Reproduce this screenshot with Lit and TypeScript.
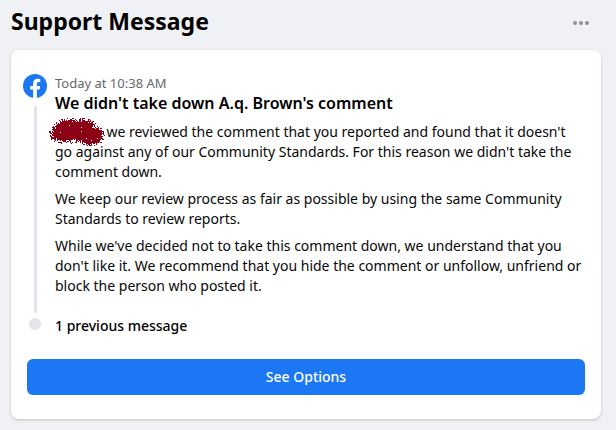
import { LitElement, html, css, svg } from "lit";
import { customElement } from "lit/decorators.js";

/** Builds a spray-paint blot out of one-pixel squares, dense in the middle and loose at the rim. */
function sprayPath(width: number, height: number): string {
  let seed = 71;
  const random = () => {
    seed = (seed * 16807) % 2147483647;
    return seed / 2147483647;
  };
  const blobs = [
    { x: 20, y: 12, rx: 17, ry: 13 },
    { x: 31, y: 12, rx: 18, ry: 13 },
    { x: 41, y: 17, rx: 15, ry: 11 },
    { x: 14, y: 15, rx: 15, ry: 10 },
  ];
  let d = "";
  for (let y = 0; y < height; y++) {
    for (let x = 0; x < width; x++) {
      const r = Math.min(
        ...blobs.map((b) => Math.hypot((x - b.x) / b.rx, (y - b.y) / b.ry))
      );
      const density = r < 0.68 ? 0.985 : r < 1.02 ? 0.9 - (r - 0.68) * 2 : 0;
      if (random() < density) d += `M${x} ${y}h1v1h-1z`;
    }
  }
  return d;
}

const SPRAY = sprayPath(56, 29);

@customElement("app-root")
export class AppRoot extends LitElement {
  static styles = css`
    :host {
      display: block;
      min-height: 100vh;
      box-sizing: border-box;
      padding: 0 15px 11px 11px;
      background: #f0f1f5;
      color: #080809;
      font-family: "Noto Sans", "Open Sans", sans-serif;
      font-size: 14px;
      line-height: 20px;
    }
    h1,
    h2,
    p {
      margin: 0;
    }
    .top {
      display: flex;
      align-items: center;
      justify-content: space-between;
      height: 50px;
      padding-right: 8px;
      box-sizing: border-box;
    }
    h1 {
      font-size: 23px;
      line-height: 28px;
      font-weight: 700;
      color: #000;
      padding-bottom: 8px;
    }
    .more {
      display: flex;
      padding: 0 4px 4px;
      border: 0;
      background: none;
      color: #8f9196;
    }
    .card {
      background: #fff;
      border-radius: 8px;
      box-shadow: 0 1px 3px rgba(0, 0, 0, 0.2);
      padding: 23px 16px 24px 12px;
    }
    .entry {
      display: flex;
      gap: 8px;
    }
    .rail {
      flex: none;
      width: 24px;
      display: flex;
      flex-direction: column;
      align-items: center;
    }
    .logo {
      margin-top: 1px;
    }
    .line {
      flex: 1;
      width: 3px;
      margin: 8px 0 0;
      background: #e4e5ea;
      border-radius: 2px;
    }
    .body {
      flex: 1;
      min-width: 0;
      padding-bottom: 17px;
    }
    .time {
      display: block;
      font-size: 13px;
      color: #65676b;
    }
    h2 {
      font-size: 16px;
      line-height: 20px;
      font-weight: 600;
      color: #000;
      margin-bottom: 9px;
    }
    p + p {
      margin-top: 7px;
    }
    .redacted {
      position: relative;
      display: inline-block;
      width: 44px;
      height: 10px;
    }
    .spray {
      position: absolute;
      left: -6px;
      top: -9px;
      fill: #8b0015;
    }
    .previous {
      font-weight: 500;
      color: #000;
      margin-top: 3px;
    }
    .dot {
      width: 12px;
      height: 12px;
      margin-top: 2px;
      border-radius: 50%;
      background: #e4e5ea;
    }
    .options {
      display: block;
      width: calc(100% - 4px);
      height: 36px;
      margin: 23px 0 0 4px;
      padding: 0;
      border: 0;
      border-radius: 6px;
      background: #1b77f3;
      color: #fff;
      font: inherit;
      font-weight: 500;
    }
  `;

  render() {
    return html`
      <header class="top">
        <h1>Support Message</h1>
        <button class="more" aria-label="More">
          <svg width="16" height="4" viewBox="0 0 16 4" fill="currentColor">
            ${[2, 8, 14].map((x) => svg`<circle cx=${x} cy="2" r="2"></circle>`)}
          </svg>
        </button>
      </header>
      <main class="card">
        <article class="entry">
          <div class="rail">
            <svg class="logo" width="24" height="24" viewBox="0 0 24 24" aria-hidden="true">
              <circle cx="12" cy="12" r="12" fill="#1b77f3"></circle>
              <path
                fill="#fff"
                d="M10.1 23.9v-8.4H7.1V12h3V9.400c0-3 1.800-4.700 4.500-4.700 1.300 0 2.700.25 2.700.25v2.950h-1.500c-1.500 0-1.950.9-1.950 1.850V12h3.300l-.53 3.500h-2.770v8.400a12 12 0 0 1-3.750 0z"
              ></path>
            </svg>
            <div class="line"></div>
          </div>
          <div class="body">
            <time class="time">Today at 10:38 AM</time>
            <h2>We didn't take down A.q. Brown's comment</h2>
            <p>
              <span class="redacted" role="img" aria-label="Name hidden"
                ><svg class="spray" width="56" height="29" shape-rendering="crispEdges">
                  <path d=${SPRAY}></path></svg></span
              >, we reviewed the comment that you reported and found that it
              doesn't go against any of our Community Standards. For this reason
              we didn't take the comment down.
            </p>
            <p>
              We keep our review process as fair as possible by using the same
              Community Standards to review reports.
            </p>
            <p>
              While we've decided not to take this comment down, we understand
              that you don't like it. We recommend that you hide the comment or
              unfollow, unfriend or block the person who posted it.
            </p>
          </div>
        </article>
        <div class="entry previous">
          <div class="rail"><div class="dot"></div></div>
          <span>1 previous message</span>
        </div>
        <button class="options">See Options</button>
      </main>
    `;
  }
}
